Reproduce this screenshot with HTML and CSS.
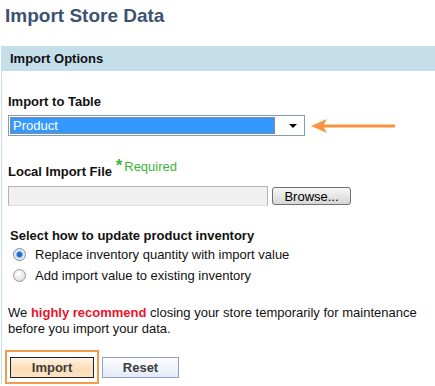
FILE: index.html
```html
<!DOCTYPE html>
<html lang="en">
<head>
  <meta charset="UTF-8">
  <title>Import Store Data</title>
  <link rel="stylesheet" href="styles.css">
</head>
<body>
  <h1 class="page-title">Import Store Data</h1>

  <div class="panel">
    <div class="panel-head">Import Options</div>
    <div class="panel-body">

      <div class="field-label">Import to Table</div>
      <div class="select-row">
        <div class="fake-select">
          <span class="sel-value"><span class="sel-text">Product</span></span>
          <span class="sel-arrow"></span>
        </div>
        <svg class="pointer" width="86" height="16" viewBox="0 0 86 16">
          <line x1="12" y1="8" x2="84" y2="8" stroke="#f7953e" stroke-width="3"/>
          <polygon points="0,8 16,1 12,8 16,15" fill="#f7953e"/>
        </svg>
      </div>

      <div class="field-label file-label">Local Import File <span class="req"><span class="req-star">*</span>Required</span></div>
      <div class="file-row">
        <div class="file-box"></div>
        <button class="browse-btn">Browse...</button>
      </div>

      <div class="field-label radio-title">Select how to update product inventory</div>
      <div class="radio-list">
        <div class="radio-row">
          <span class="radio checked"></span>
          <span>Replace inventory quantity with import value</span>
        </div>
        <div class="radio-row">
          <span class="radio"></span>
          <span>Add import value to existing inventory</span>
        </div>
      </div>

      <p class="notice">We <strong class="hot">highly recommend</strong> closing your store temporarily for maintenance before you import your data.</p>

      <div class="btn-row">
        <div class="focus-frame">
          <button class="btn btn-import">Import</button>
        </div>
        <button class="btn btn-reset">Reset</button>
      </div>

    </div>
  </div>
</body>
</html>
```

FILE: styles.css
```css
body {
  margin: 0;
  font-family: "Liberation Sans", Arial, sans-serif;
  font-size: 13px;
  line-height: 16px;
  color: #111;
  background: #fff;
}

.page-title {
  margin: 4px 0 0 5px;
  font-size: 19px;
  line-height: 24px;
  font-weight: bold;
  color: #3d5273;
}

.panel {
  margin: 18px 0 0 1px;
  border-left: 1px solid #c5dfea;
}

.panel-head {
  height: 25px;
  line-height: 25px;
  padding-left: 9px;
  margin-left: -1px;
  background: #c5dfea;
  font-weight: bold;
  color: #111;
}

.panel-body {
  padding: 23px 8px 0 6px;
}

.field-label {
  font-weight: bold;
}

.select-row {
  display: flex;
  align-items: center;
  margin-top: 5px;
}

.fake-select {
  width: 295px;
  height: 19px;
  border: 1px solid #7f9db9;
  display: flex;
  align-items: center;
  background: #fff;
}

.sel-value {
  flex: 1;
  height: 17px;
  margin-left: 1px;
  display: flex;
}

.sel-text {
  flex: 1;
  background: #3399ff;
  color: #fff;
  outline: 1px dotted #e07a2a;
  outline-offset: -1px;
  padding-left: 3px;
  line-height: 17px;
}

.sel-arrow {
  width: 0;
  height: 0;
  margin: 0 7px 0 14px;
  border-left: 4px solid transparent;
  border-right: 4px solid transparent;
  border-top: 4px solid #000;
}

.pointer {
  margin-left: 6px;
}

.file-label {
  margin-top: 22px;
  line-height: 21px;
}

.req {
  font-weight: normal;
  color: #3cb43c;
  vertical-align: 5px;
  line-height: 16px;
}

.req-star {
  font-weight: bold;
  font-size: 17px;
  margin-right: 2px;
}

.file-row {
  display: flex;
  align-items: center;
  gap: 4px;
  margin-top: 4px;
}

.file-box {
  width: 258px;
  height: 18px;
  background: #f0f0f0;
  border: 1px solid #b4b4b4;
  border-bottom-color: #dcdcdc;
}

.browse-btn {
  width: 79px;
  height: 18px;
  padding: 0;
  font-family: inherit;
  font-size: 13px;
  color: #000;
  border: 1px solid #707070;
  border-radius: 3px;
  background: linear-gradient(#f6f6f6, #e6e6e6 50%, #d6d6d6);
}

.radio-title {
  margin: 22px 0 0 2px;
}

.radio-row {
  display: flex;
  align-items: center;
  gap: 9px;
  height: 21px;
  padding-left: 5px;
}

.radio {
  width: 11px;
  height: 11px;
  border-radius: 50%;
  border: 1px solid #9a9a9a;
  background: radial-gradient(circle at 40% 35%, #fff, #dcdcdc 80%);
}

.radio.checked {
  border-color: #7a8ca0;
  background: radial-gradient(circle, #1f5fb8 0, #2c7ad6 2.5px, #cfe0f2 3.5px, #f4f4f4 6px);
}

.notice {
  margin: 19px 0 0 0;
}

.hot {
  color: #e8142b;
}

.btn-row {
  display: flex;
  align-items: flex-end;
  gap: 3px;
  margin-top: 13px;
}

.focus-frame {
  border: 2px solid #f39a4b;
  padding: 5px 3px 4px 3px;
  margin-left: -3px;
}

.btn {
  height: 21px;
  padding: 0;
  font-family: inherit;
  font-size: 13px;
  font-weight: bold;
  color: #3d3d3d;
}

.btn-import {
  width: 84px;
  border: 1px solid #222;
  background: linear-gradient(#fff3e3, #fddcb6 60%, #fce4c8);
}

.btn-reset {
  width: 77px;
  margin-bottom: 6px;
  border: 1px solid #8f9fd2;
  background: linear-gradient(#fdfdff, #e4ebf7);
}
```
